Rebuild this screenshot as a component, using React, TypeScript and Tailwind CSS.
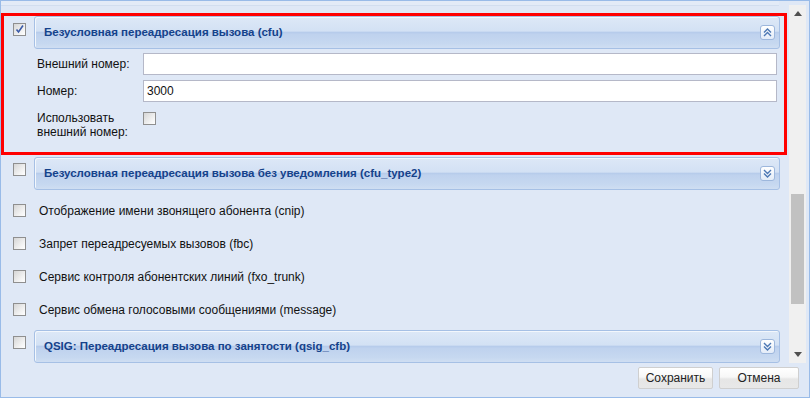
import React from "react";

function Cb({ checked }: { checked?: boolean }) {
  return (
    <div className="relative h-[13px] w-[13px] shrink-0 border border-[#8f8f8f] bg-[linear-gradient(135deg,#d6d6d6_0%,#f4f4f4_70%,#ffffff_100%)]">
      {checked && (
        <svg className="absolute left-0 top-0" width="11" height="11" viewBox="0 0 11 11">
          <path d="M2.5 5.5 L4.5 8 L9 1.5" fill="none" stroke="#3a5aa8" strokeWidth="1.6" />
        </svg>
      )}
    </div>
  );
}

function Toggle({ up }: { up?: boolean }) {
  return (
    <div className="flex h-[15px] w-[15px] items-center justify-center rounded-[3px] border border-[#9db7dc] bg-[linear-gradient(to_bottom,#ffffff,#e3ecf8)]">
      <svg width="11" height="11" viewBox="0 0 11 11">
        {up ? (
          <>
            <path d="M2 5.5 L5.5 2 L9 5.5" fill="none" stroke="#4d78b4" strokeWidth="1.4" />
            <path d="M2 9 L5.5 5.5 L9 9" fill="none" stroke="#4d78b4" strokeWidth="1.4" />
          </>
        ) : (
          <>
            <path d="M2 2 L5.5 5.5 L9 2" fill="none" stroke="#4d78b4" strokeWidth="1.4" />
            <path d="M2 5.5 L5.5 9 L9 5.5" fill="none" stroke="#4d78b4" strokeWidth="1.4" />
          </>
        )}
      </svg>
    </div>
  );
}

function Header({ title, up }: { title: string; up?: boolean }) {
  return (
    <div className="flex h-[33px] flex-1 items-center justify-between rounded-[3px] border border-[#a6c0e5] bg-[linear-gradient(to_bottom,#dde8f7_0%,#d3e1f4_45%,#b7cceb_50%,#bfd2ee_56%,#c6d8f0_85%,#cfdef2_100%)] pl-[9px] pr-[4px] shadow-[inset_1px_1px_0_#f3f7fc]">
      <span className="text-[11.5px] font-bold text-[#15428b]">{title}</span>
      <Toggle up={up} />
    </div>
  );
}

function PanelRow({ title, up }: { title: string; up?: boolean }) {
  return (
    <div className="flex items-start">
      <div className="ml-[12px] mr-[8px] mt-[6px]">
        <Cb />
      </div>
      <div className="mr-[8px] flex flex-1">
        <Header title={title} up={up} />
      </div>
    </div>
  );
}

function PlainRow({ label }: { label: string }) {
  return (
    <div className="flex h-[33px] items-center">
      <div className="ml-[12px] mr-[13px]">
        <Cb />
      </div>
      <span className="text-[12px] text-[#111]">{label}</span>
    </div>
  );
}

function Btn({ label, w }: { label: string; w: string }) {
  return (
    <div
      className={`flex h-[22px] ${w} items-center justify-center rounded-[2px] border border-[#cfcfcf] bg-[linear-gradient(to_bottom,#ffffff_0%,#f7f7f7_45%,#e6e6e6_55%,#e8e8e8_100%)] text-[12px] text-[#222]`}
    >
      {label}
    </div>
  );
}

export default function App() {
  return (
    <div
      className="flex h-[398px] w-[810px] flex-col border border-[#99bbe8] bg-[#dfe8f6]"
      style={{ fontFamily: '"Liberation Sans", Arial, sans-serif' }}
    >
      <div className="flex h-[362px] overflow-hidden">
        <div className="flex w-[787px] flex-col">
          <div className="h-[5px] w-[778px] border-b border-[#d2deef] bg-[#e3ebf7]" />
          {/* highlighted cfu block */}
          <div className="mt-[7px] h-[143px] w-[786px] border-[3px] border-[#ff0000]">
            <div className="flex items-start">
              <div className="ml-[9px] mr-[8px] mt-[7px]">
                <Cb checked />
              </div>
              <div className="mr-[4px] flex flex-1">
                <Header title="Безусловная переадресация вызова (cfu)" up />
              </div>
            </div>
            <div className="flex flex-col pl-[33px] pr-[7px] pt-[4px]">
              <div className="flex h-[22px] items-center">
                <span className="w-[106px] text-[12px] text-[#111]">Внешний номер:</span>
                <div className="h-[22px] flex-1 border border-[#b5b8c8] bg-white" />
              </div>
              <div className="mt-[5px] flex h-[22px] items-center">
                <span className="w-[106px] text-[12px] text-[#111]">Номер:</span>
                <div className="flex h-[22px] flex-1 items-center border border-[#b5b8c8] bg-white pl-[3px] text-[12px] text-[#111]">
                  3000
                </div>
              </div>
              <div className="mt-[9px] flex items-start">
                <span className="w-[106px] text-[12px] leading-[14px] text-[#111]">
                  Использовать
                  <br />
                  внешний номер:
                </span>
                <div className="mt-[1px]">
                  <Cb />
                </div>
              </div>
            </div>
          </div>
          <div className="mt-[2px]">
            <PanelRow title="Безусловная переадресация вызова без уведомления (cfu_type2)" />
          </div>
          <div className="mt-[4px]">
            <PlainRow label="Отображение имени звонящего абонента (cnip)" />
            <PlainRow label="Запрет переадресуемых вызовов (fbc)" />
            <PlainRow label="Сервис контроля абонентских линий (fxo_trunk)" />
            <PlainRow label="Сервис обмена голосовыми сообщениями (message)" />
          </div>
          <div className="mt-[4px]">
            <PanelRow title="QSIG: Переадресация вызова по занятости (qsig_cfb)" />
          </div>
        </div>
        <div className="ml-[1px] mt-[4px] flex h-[358px] w-[17px] flex-col items-center bg-[#f0f0f0]">
          <div className="flex h-[17px] w-full items-center justify-center">
            <svg width="8" height="5" viewBox="0 0 8 5">
              <path d="M0 5 L4 0 L8 5 Z" fill="#505050" />
            </svg>
          </div>
          <div className="mt-[172px] h-[110px] w-[13px] bg-[#c1c1c1]" />
          <div className="flex-1" />
          <div className="flex h-[17px] w-full items-center justify-center">
            <svg width="8" height="5" viewBox="0 0 8 5">
              <path d="M0 0 L8 0 L4 5 Z" fill="#505050" />
            </svg>
          </div>
        </div>
      </div>
      <div className="flex flex-1 items-start justify-end gap-[6px] pr-[10px] pt-[4px]">
        <Btn label="Сохранить" w="w-[75px]" />
        <Btn label="Отмена" w="w-[80px]" />
      </div>
    </div>
  );
}
